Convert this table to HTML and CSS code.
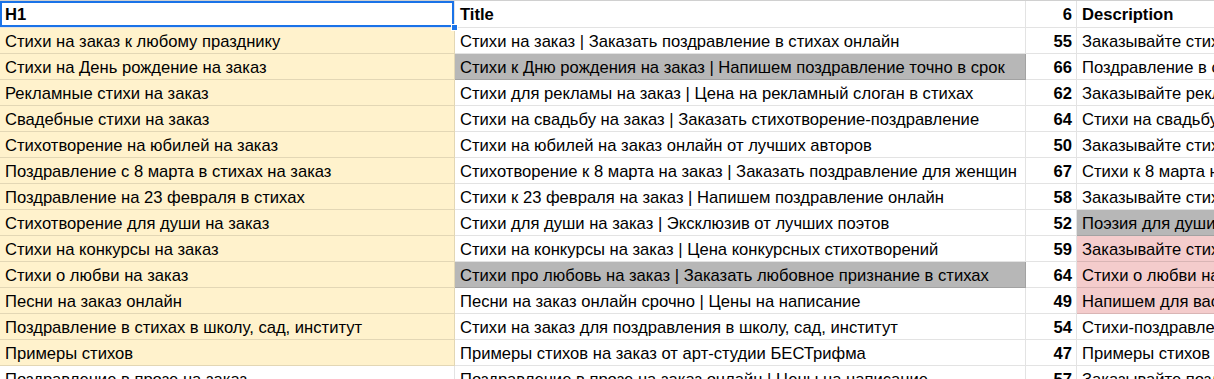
FILE: index.html
```html
<!DOCTYPE html>
<html lang="ru">
<head>
<meta charset="utf-8">
<title>Sheet</title>
<link rel="stylesheet" href="styles.css">
</head>
<body>
<div class="sheet">
  <table class="grid">
    <colgroup>
      <col class="col-a"><col class="col-b"><col class="col-c"><col class="col-d">
    </colgroup>
    <tr class="head">
      <td class="h1 sel">H1<span class="handle"></span></td>
      <td>Title</td>
      <td class="num">6</td>
      <td>Description</td>
    </tr>
    <tr>
      <td class="h1">Стихи на заказ к любому празднику</td>
      <td>Стихи на заказ | Заказать поздравление в стихах онлайн</td>
      <td class="num">55</td>
      <td>Заказывайте стихи на заказ к любому празднику у профессиональных авторов</td>
    </tr>
    <tr>
      <td class="h1">Стихи на День рождение на заказ</td>
      <td class="gray">Стихи к Дню рождения на заказ | Напишем поздравление точно в срок</td>
      <td class="num">66</td>
      <td>Поздравление в стихах на день рождения от профессиональных поэтов</td>
    </tr>
    <tr>
      <td class="h1">Рекламные стихи на заказ</td>
      <td>Стихи для рекламы на заказ | Цена на рекламный слоган в стихах</td>
      <td class="num">62</td>
      <td>Заказывайте рекламные стихи и слоганы у лучших авторов</td>
    </tr>
    <tr>
      <td class="h1">Свадебные стихи на заказ</td>
      <td>Стихи на свадьбу на заказ | Заказать стихотворение-поздравление</td>
      <td class="num">64</td>
      <td>Стихи на свадьбу на заказ от профессиональных поэтов</td>
    </tr>
    <tr>
      <td class="h1">Стихотворение на юбилей на заказ</td>
      <td>Стихи на юбилей на заказ онлайн от лучших авторов</td>
      <td class="num">50</td>
      <td>Заказывайте стихи на юбилей у профессиональных авторов</td>
    </tr>
    <tr>
      <td class="h1">Поздравление с 8 марта в стихах на заказ</td>
      <td>Стихотворение к 8 марта на заказ | Заказать поздравление для женщин</td>
      <td class="num">67</td>
      <td>Стихи к 8 марта на заказ для любимых женщин</td>
    </tr>
    <tr>
      <td class="h1">Поздравление на 23 февраля в стихах</td>
      <td>Стихи к 23 февраля на заказ | Напишем поздравление онлайн</td>
      <td class="num">58</td>
      <td>Заказывайте стихи к 23 февраля у лучших авторов</td>
    </tr>
    <tr>
      <td class="h1">Стихотворение для души на заказ</td>
      <td>Стихи для души на заказ | Эксклюзив от лучших поэтов</td>
      <td class="num">52</td>
      <td class="gray">Поэзия для души на заказ от лучших поэтов</td>
    </tr>
    <tr>
      <td class="h1">Стихи на конкурсы на заказ</td>
      <td>Стихи на конкурсы на заказ | Цена конкурсных стихотворений</td>
      <td class="num">59</td>
      <td class="pink">Заказывайте стихи на конкурсы у профессионалов</td>
    </tr>
    <tr>
      <td class="h1">Стихи о любви на заказ</td>
      <td class="gray">Стихи про любовь на заказ | Заказать любовное признание в стихах</td>
      <td class="num">64</td>
      <td class="pink">Стихи о любви на заказ для любимых</td>
    </tr>
    <tr>
      <td class="h1">Песни на заказ онлайн</td>
      <td>Песни на заказ онлайн срочно | Цены на написание</td>
      <td class="num">49</td>
      <td class="pink">Напишем для вас песню на заказ</td>
    </tr>
    <tr>
      <td class="h1">Поздравление в стихах в школу, сад, институт</td>
      <td>Стихи на заказ для поздравления в школу, сад, институт</td>
      <td class="num">54</td>
      <td>Стихи-поздравления в школу, сад, институт на заказ</td>
    </tr>
    <tr>
      <td class="h1">Примеры стихов</td>
      <td>Примеры стихов на заказ от арт-студии БЕСТрифма</td>
      <td class="num">47</td>
      <td>Примеры стихов на заказ от арт-студии</td>
    </tr>
    <tr>
      <td>Поздравление в прозе на заказ</td>
      <td>Поздравление в прозе на заказ онлайн | Цены на написание</td>
      <td class="num">57</td>
      <td>Заказывайте поздравления в прозе у лучших авторов</td>
    </tr>
  </table>
</div>
</body>
</html>
```

FILE: styles.css
```css
html, body {
  margin: 0;
  padding: 0;
  background: #ffffff;
}

.sheet {
  width: 1214px;
  height: 379px;
  overflow: hidden;
  border-top: 1px solid #d0d0d0;
  box-sizing: border-box;
}

.grid {
  border-collapse: separate;
  border-spacing: 0;
  table-layout: fixed;
  width: 1400px;
  font-family: "Liberation Sans", Arial, sans-serif;
  font-size: 16.6px;
  color: #000000;
}

.col-a { width: 455px; }
.col-b { width: 571px; }
.col-c { width: 51px; }
.col-d { width: 323px; }

.grid td {
  height: 26px;
  padding: 2px 4px 0 5px;
  box-sizing: border-box;
  border-right: 1px solid rgba(0, 0, 0, 0.11);
  border-bottom: 1px solid rgba(0, 0, 0, 0.11);
  white-space: nowrap;
  overflow: hidden;
  line-height: 23px;
  vertical-align: middle;
  position: relative;
}

.grid tr.head td {
  height: 27px;
  font-weight: bold;
  line-height: 24px;
}

.grid td.h1 {
  background: #fff2cc;
}

.grid tr.head td.h1 {
  background: #ffffff;
}

.grid td.gray {
  background: #b7b7b7;
}

.grid td.pink {
  background: #f4cccc;
}

.grid td.num {
  text-align: right;
  font-weight: bold;
  padding-left: 2px;
  padding-right: 4px;
}

.grid td.sel {
  overflow: visible;
  box-shadow: inset 0 0 0 2px #1a73e8;
}

.handle {
  position: absolute;
  right: -4px;
  bottom: -4px;
  width: 7px;
  height: 7px;
  background: #1a73e8;
  border: 1px solid #ffffff;
  box-sizing: border-box;
  z-index: 2;
}
```
